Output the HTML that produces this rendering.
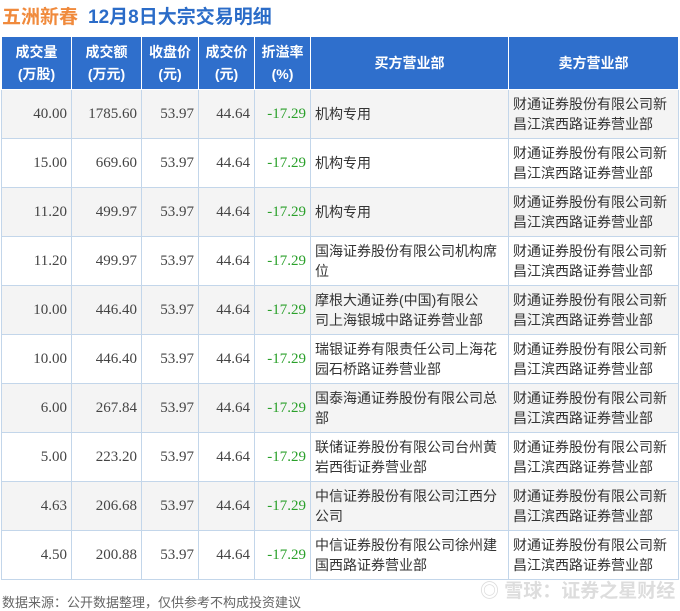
<!DOCTYPE html>
<html><head><meta charset="utf-8"><style>
body{margin:0;width:680px;height:610px;background:#fff;position:relative;overflow:hidden;font-family:"Liberation Sans","Noto Sans CJK SC",sans-serif}
.t{position:absolute;top:2px;left:2px;font-size:19px;font-weight:bold;white-space:nowrap}
.t .a{color:#f08a3c}.t .b{color:#2b6cc8;margin-left:10px}
table{position:absolute;left:1px;top:37px;border-collapse:collapse;table-layout:fixed}
th{background:#2f6fcc;color:#fff;font-size:14px;font-weight:bold;height:52px;border:1px solid #fff;border-top:none;line-height:22px;padding:0}
td{height:48px;border:1px solid #c3d6ea;font-size:14px;color:#333;padding:0 4px;line-height:20px}
td.l{padding:0 8px 0 4px}
td.n{text-align:right;font-family:"Liberation Serif","Noto Serif CJK SC",serif;font-size:15px;color:#444}
td.g{color:#2aa02a}
tr:nth-child(even) td{background:#f4f4f4}
.f{position:absolute;left:2px;top:592px;font-size:13px;color:#666}
.w{position:absolute;left:480px;top:576px;font-size:19px;color:#ddd;font-weight:bold;white-space:nowrap}
</style></head><body>
<div class="t"><span class="a">五洲新春</span><span class="b">12月8日大宗交易明细</span></div>
<table>
<colgroup><col style="width:70px"><col style="width:70px"><col style="width:57px"><col style="width:56px"><col style="width:56px"><col style="width:198px"><col style="width:170px"></colgroup>
<tr><th>成交量<br>(万股)</th><th>成交额<br>(万元)</th><th>收盘价<br>(元)</th><th>成交价<br>(元)</th><th>折溢率<br>(%)</th><th>买方营业部</th><th>卖方营业部</th></tr>
<tr><td class="n">40.00</td><td class="n">1785.60</td><td class="n">53.97</td><td class="n">44.64</td><td class="n g">-17.29</td><td class="l">机构专用</td><td>财通证券股份有限公司新昌江滨西路证券营业部</td></tr>
<tr><td class="n">15.00</td><td class="n">669.60</td><td class="n">53.97</td><td class="n">44.64</td><td class="n g">-17.29</td><td class="l">机构专用</td><td>财通证券股份有限公司新昌江滨西路证券营业部</td></tr>
<tr><td class="n">11.20</td><td class="n">499.97</td><td class="n">53.97</td><td class="n">44.64</td><td class="n g">-17.29</td><td class="l">机构专用</td><td>财通证券股份有限公司新昌江滨西路证券营业部</td></tr>
<tr><td class="n">11.20</td><td class="n">499.97</td><td class="n">53.97</td><td class="n">44.64</td><td class="n g">-17.29</td><td class="l">国海证券股份有限公司机构席位</td><td>财通证券股份有限公司新昌江滨西路证券营业部</td></tr>
<tr><td class="n">10.00</td><td class="n">446.40</td><td class="n">53.97</td><td class="n">44.64</td><td class="n g">-17.29</td><td class="l">摩根大通证券(中国)有限公<br>司上海银城中路证券营业部</td><td>财通证券股份有限公司新昌江滨西路证券营业部</td></tr>
<tr><td class="n">10.00</td><td class="n">446.40</td><td class="n">53.97</td><td class="n">44.64</td><td class="n g">-17.29</td><td class="l">瑞银证券有限责任公司上海花园石桥路证券营业部</td><td>财通证券股份有限公司新昌江滨西路证券营业部</td></tr>
<tr><td class="n">6.00</td><td class="n">267.84</td><td class="n">53.97</td><td class="n">44.64</td><td class="n g">-17.29</td><td class="l">国泰海通证券股份有限公司总部</td><td>财通证券股份有限公司新昌江滨西路证券营业部</td></tr>
<tr><td class="n">5.00</td><td class="n">223.20</td><td class="n">53.97</td><td class="n">44.64</td><td class="n g">-17.29</td><td class="l">联储证券股份有限公司台州黄岩西街证券营业部</td><td>财通证券股份有限公司新昌江滨西路证券营业部</td></tr>
<tr><td class="n">4.63</td><td class="n">206.68</td><td class="n">53.97</td><td class="n">44.64</td><td class="n g">-17.29</td><td class="l">中信证券股份有限公司江西分公司</td><td>财通证券股份有限公司新昌江滨西路证券营业部</td></tr>
<tr><td class="n">4.50</td><td class="n">200.88</td><td class="n">53.97</td><td class="n">44.64</td><td class="n g">-17.29</td><td class="l">中信证券股份有限公司徐州建国西路证券营业部</td><td>财通证券股份有限公司新昌江滨西路证券营业部</td></tr>
</table>
<div class="w">◎ 雪球：证券之星财经</div>
<div class="f">数据来源：公开数据整理，仅供参考不构成投资建议</div>
</body></html>
